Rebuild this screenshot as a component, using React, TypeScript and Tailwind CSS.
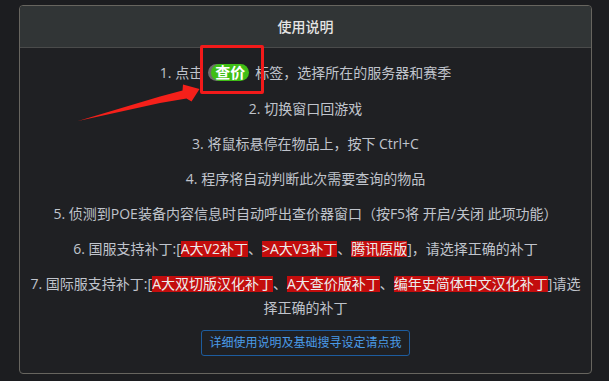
import React from "react";

const Hl = ({ children }: { children: React.ReactNode }) => (
  <span className="inline-block bg-[#c30d0d] text-[#ececec] leading-[16px]">{children}</span>
);

export default function App() {
  return (
    <div className="relative w-[609px] h-[381px] bg-[#1c1d20] overflow-hidden font-['Open_Sans','Noto_Sans_CJK_SC',sans-serif] pt-[5px]">
      <div className="ml-[19px] w-[573px] border border-[#67655f] rounded-[4px] bg-[#1f2023] overflow-hidden">
        <div className="h-[42px] flex items-center justify-center bg-[#313536] border-b border-[#4a4b4b] text-[14px] text-[#e4e4e4] font-medium">
          使用说明
        </div>
        <div className="px-2 pt-[11px] pb-[17px] flex flex-col items-center gap-[11px] text-center text-[14px] leading-[24px] text-[#c0c4cc]">
          <p className="w-full leading-[27px]">
            1. 点击
            <span className="inline-block ml-[8px] mr-[6px] h-[17px] px-[4px] rounded-full bg-[#3fbe16] text-white font-bold text-[15px] leading-[17px] shadow-[-3px_0_0_0_#6d6d6d]">
              查价
            </span>
            标签，选择所在的服务器和赛季
          </p>
          <p className="w-full">2. 切换窗口回游戏</p>
          <p className="w-full">3. 将鼠标悬停在物品上，按下 Ctrl+C</p>
          <p className="w-full">4. 程序将自动判断此次需要查询的物品</p>
          <p className="w-full">5. 侦测到POE装备内容信息时自动呼出查价器窗口（按F5将 开启/关闭 此项功能）</p>
          <p className="w-full">
            6. 国服支持补丁:[<Hl>A大V2补丁</Hl>、<Hl>&gt;A大V3补丁</Hl>、<Hl>腾讯原版</Hl>]，请选择正确的补丁
          </p>
          <p className="w-full">
            7. 国际服支持补丁:[<Hl>A大双切版汉化补丁</Hl>、<Hl>A大查价版补丁</Hl>、<Hl>编年史简体中文汉化补丁</Hl>]请选择正确的补丁
          </p>
          <button className="mt-[-1px] h-[26px] px-[7px] border border-[#1d5c9e] rounded-[3px] text-[12px] leading-[24px] text-[#4a9be8] bg-transparent">
            详细使用说明及基础搜寻设定请点我
          </button>
        </div>
      </div>

      {/* annotation overlays */}
      <div className="absolute left-[200px] top-[45px] w-[64px] h-[49px] border-[3px] border-[#f21a1a] rounded-[2px]" />
      <svg className="absolute left-0 top-0" width="609" height="381" viewBox="0 0 609 381">
        <polygon
          fill="#f5201a"
          points="78,121 160,96.5 182.5,90.5 183,84.5 199.5,89 191.5,101.5 186.5,98.5 160,103"
        />
      </svg>
    </div>
  );
}
